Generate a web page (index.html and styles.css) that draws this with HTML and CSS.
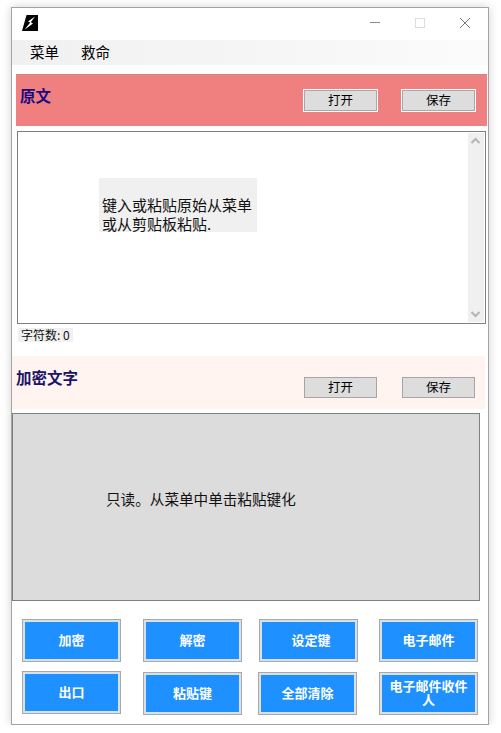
FILE: index.html
```html
<!DOCTYPE html>
<html lang="zh">
<head>
<meta charset="utf-8">
<title>加密</title>
<link rel="stylesheet" href="styles.css">
</head>
<body>
<div class="window">
  <div class="titlebar">
    <svg class="app-icon" width="16" height="16" viewBox="0 0 16 16"><path d="M4.5 0H16V16H0Z" fill="#000"/><path d="M13 1.5L6 6.5L8.2 7.6L2.5 14.8L11 8.6L8.8 7.2Z" fill="#fff"/></svg>
    <div class="controls">
      <svg width="12" height="12" viewBox="0 0 12 12"><path d="M1 5.5H11" stroke="#8a8a8a" fill="none"/></svg>
      <svg width="12" height="12" viewBox="0 0 12 12"><rect x="1.5" y="1.5" width="9" height="9" stroke="#dcdcdc" fill="none"/></svg>
      <svg width="12" height="12" viewBox="0 0 12 12"><path d="M1 1L11 11M11 1L1 11" stroke="#777" fill="none"/></svg>
    </div>
  </div>
  <div class="menubar"><span class="menu-item">菜单</span><span class="menu-item">救命</span></div>

  <section class="band band-red">
    <h2 class="band-title">原文</h2>
    <div class="band-actions">
      <button class="file-btn file-btn-raised">打开</button>
      <button class="file-btn file-btn-raised">保存</button>
    </div>
  </section>

  <div class="source">
    <div class="placeholder">键入或粘贴原始从菜单<br>或从剪贴板粘贴.</div>
    <div class="scrollbar">
      <svg width="16" height="17" viewBox="0 0 16 17"><path d="M3.5 10L7.5 6L11.5 10" stroke="#b5b5b5" stroke-width="2" fill="none"/></svg>
      <svg width="16" height="17" viewBox="0 0 16 17"><path d="M3.5 7L7.5 11L11.5 7" stroke="#b5b5b5" stroke-width="2" fill="none"/></svg>
    </div>
  </div>
  <div class="count">字符数: 0</div>

  <section class="band band-pink">
    <h2 class="band-title band-title-pink">加密文字</h2>
    <div class="band-actions band-actions-pink">
      <button class="file-btn file-btn-flat">打开</button>
      <button class="file-btn file-btn-flat">保存</button>
    </div>
  </section>

  <div class="output">只读。从菜单中单击粘贴键化</div>

  <div class="actions">
    <button class="action">加密</button>
    <button class="action">解密</button>
    <button class="action action-pad">设定键</button>
    <button class="action">电子邮件</button>
    <button class="action">出口</button>
    <button class="action action-low">粘贴键</button>
    <button class="action action-low action-left">全部清除</button>
    <button class="action action-low action-wrap">电子邮件收件人</button>
  </div>
</div>
</body>
</html>
```
FILE: styles.css
```css
* { box-sizing: border-box; }
html, body { margin: 0; padding: 0; background: #fff; }
body { font-family: "Noto Sans CJK SC", "Liberation Sans", sans-serif; color: #000; }

.window {
  width: 478px;
  height: 718px;
  margin: 7px 0 0 11px;
  background: #fff;
  border: 1px solid #a3a3a3;
  box-shadow: 0 0 9px rgba(0, 0, 0, 0.18);
}

.titlebar {
  height: 32px;
  display: flex;
  align-items: center;
  justify-content: space-between;
  padding: 0 17px 2px 10px;
}
.controls { display: flex; gap: 33px; }

.menubar {
  height: 25px;
  display: flex;
  align-items: center;
  padding: 0 0 2px 18px;
  gap: 22px;
  font-size: 14.5px;
  background: linear-gradient(to right, #f0f0f0, #fbfbfb);
}

.band { display: flex; justify-content: space-between; align-items: flex-start; }
.band-red {
  width: 471px;
  height: 52px;
  margin: 9px 0 0 4px;
  padding: 0 11px 0 4px;
  background: #f08080;
  border-top: 1px solid #c98888;
}
.band-pink {
  width: 473px;
  height: 53px;
  margin-top: 14px;
  padding: 0 10px 0 4px;
  background: #fff4ef;
}
.band-title {
  margin: 11px 0 0;
  font-size: 15.5px;
  line-height: 18px;
  font-weight: 700;
  color: #1c0a80;
}
.band-title-pink { margin-top: 12px; color: #1c1468; }
.band-actions { display: flex; gap: 23px; margin-top: 14px; }
.band-actions-pink { gap: 25px; margin-top: 21px; }

.file-btn {
  padding: 0;
  background: #dddddd;
  font: 12.5px/1 "Noto Sans CJK SC", "Liberation Sans", sans-serif;
  color: #000;
}
.file-btn-raised {
  width: 75px;
  height: 23px;
  border: 1px solid #fff;
  box-shadow: inset 0 0 0 1px #a9a9a9;
}
.file-btn-flat {
  width: 73px;
  height: 21px;
  border: 1px solid #a5a5a5;
}

.source {
  position: relative;
  width: 469px;
  height: 193px;
  margin: 5px 0 0 5px;
  border: 1px solid #808080;
  display: flex;
  justify-content: flex-end;
}
.placeholder {
  position: absolute;
  left: 81px;
  top: 46px;
  width: 158px;
  height: 54px;
  padding: 17px 0 0 3px;
  background: #f0f0f0;
  font-size: 15px;
  line-height: 19px;
  white-space: nowrap;
  color: #111;
}
.scrollbar {
  width: 16px;
  margin: 1px 1px 1px 0;
  background: #f0f0f0;
  display: flex;
  flex-direction: column;
  justify-content: space-between;
}

.count {
  width: 55px;
  height: 14px;
  margin: 4px 0 0 6px;
  padding-left: 3px;
  background: #f0f0f0;
  font-size: 12px;
  line-height: 14px;
  white-space: nowrap;
  color: #111;
}

.output {
  width: 468px;
  height: 188px;
  margin-top: 4px;
  padding: 75px 0 0 93px;
  background: #dcdcdc;
  border: 1px solid #808080;
  font-size: 14.6px;
  line-height: 19px;
  color: #111;
}

.actions {
  display: grid;
  grid-template-columns: 121px 116px 120px 99px;
  row-gap: 9px;
  margin-top: 18px;
  padding-left: 10px;
}
.action {
  width: 99px;
  height: 43px;
  padding: 0 4px 2px;
  background: #1e90ff;
  border: 3px solid #d8e0e8;
  outline: 1px solid #a9a9a9;
  outline-offset: -1px;
  color: #fff;
  font: 700 13px/14px "Noto Sans CJK SC", "Liberation Sans", sans-serif;
}
.action-low { margin-top: 1px; }
.action-left { margin-left: -1px; }
.action-pad { padding-left: 9px; }
.action-wrap { padding: 0 6px 2px; }
```
